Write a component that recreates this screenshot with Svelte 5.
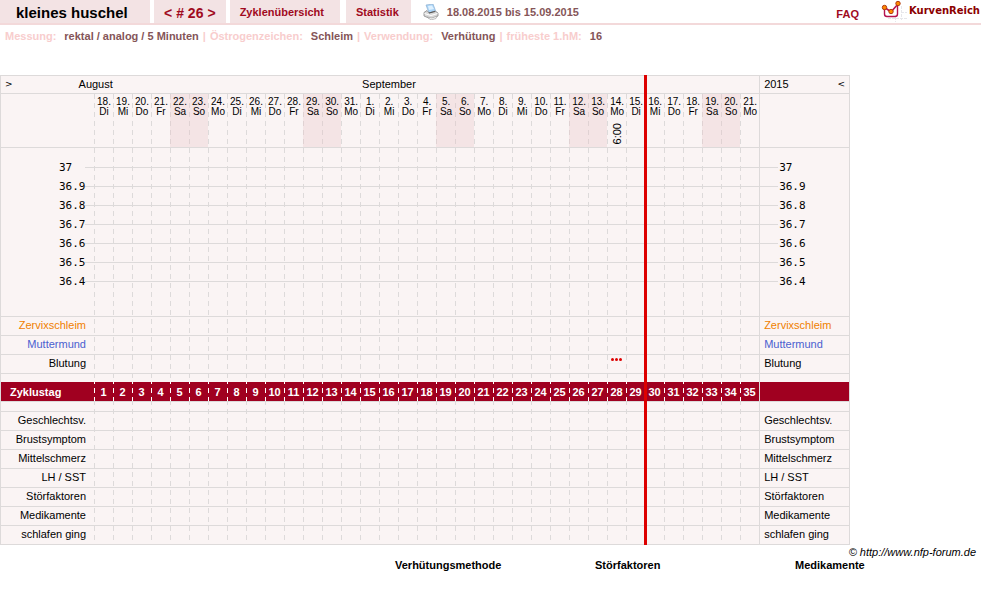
<header class="topbar">
  <nav>
    <h1>kleines huschel</h1>
    <div class="tab cycle">
      <a href="#prev" aria-label="Vorheriger Zyklus">&lt;</a>
      <a href="#26"># 26</a>
      <a href="#next" aria-label="Nächster Zyklus">&gt;</a>
    </div>
    <a class="tab overview" href="#zyklen">Zyklenübersicht</a>
    <a class="tab stats" href="#statistik">Statistik</a>
  </nav>
  <a class="print" href="#drucken" aria-label="Drucken">
    <svg width="16" height="16" viewBox="0 0 16 16">
      <path d="M3 1 L10 0 L13 8 L6 9 Z" fill="#a9d4f8" stroke="#8fb0d0" stroke-width=".7" />
      <path d="M5 2 L9 1.500 L11 5 L6 6 Z" fill="#dff1ff" />
      <path d="M1 8.500 L4 6.500 L6 9 L12 7 L15 9 V12 L8 15 L1 12 Z" fill="#d8d8d8" stroke="#888888" stroke-width=".8" />
      <path d="M1.500 9.500 L8 11.500 L14.500 9.500" fill="none" stroke="#ffffff" />
      <path d="M4 13 L9 14 L14 12 L13 14.500 L8 16 Z" fill="#f4f4f4" stroke="#999999" stroke-width=".6" />
      <path d="M6 9 L12 7.500" stroke="#555555" stroke-width="1.1" />
    </svg>
  </a>
  <span class="period">18.08.2015 bis 15.09.2015</span>
  <a class="faq" href="#faq">FAQ</a>
  <a class="brand" href="#start">
    <svg width="26" height="22" viewBox="0 0 26 22">
      <path d="M7 18.500 H26 M14.500 17 V22 M20.500 6 V20 M20 12.500 H26" stroke="#e6e6ea" stroke-dasharray="3 1" fill="none" />
      <path d="M3.500 7 V14 Q3.500 16.500 6 16.500 H14 Q16.500 16.500 16.500 14 V5" fill="none" stroke="#b5124f" stroke-width="1.4" />
      <path d="M3 7 L10 12 L17 4" fill="none" stroke="#b5124f" stroke-width="1.6" />
      <circle cx="3.500" cy="7.500" r="2.200" fill="#ff8a00" stroke="#b03a10" />
      <circle cx="10" cy="11.500" r="2.200" fill="#ff8a00" stroke="#b03a10" />
      <circle cx="17" cy="3.500" r="2.200" fill="#ff8a00" stroke="#b03a10" />
    </svg>
    <span>KurvenReich</span>
  </a>
</header>

<dl class="settings">
  {#each settings as { name, value }}
    <div>
      <dt>{name}:</dt>
      <dd>{value}</dd>
    </div>
  {/each}
</dl>

<main>
  <table>
    <colgroup>
      <col class="label-col" />
      {#each days as day}
        <col class="day-col" />
      {/each}
      <col class="end-col" />
    </colgroup>
    <thead>
      <tr class="months">
        <th colspan="13">
          <div class="month-start">
            <button aria-label="Zurück">&gt;</button>
            <span>August</span>
          </div>
        </th>
        <th colspan="17" class="september today">September</th>
        <th colspan="6"></th>
        <th class="end">
          <div class="year">
            <span>2015</span>
            <button aria-label="Weiter">&lt;</button>
          </div>
        </th>
      </tr>
      <tr class="dates">
        <td></td>
        {#each days as day}
          <th class="day" class:weekend={day.weekend} class:today={day.nr === lastDay}>
            {day.date}.<br />{day.name}
            {#if day.time}
              <span class="time">{day.time}</span>
            {/if}
          </th>
        {/each}
        <td class="end"></td>
      </tr>
    </thead>
    <tbody>
      {@render emptyRow('pad-top')}
      {#each temperatures as temperature}
        <tr class="temp">
          <th><span>{temperature}</span></th>
          {@render cells()}
          <td class="end"><span>{temperature}</span></td>
        </tr>
      {/each}
      {@render emptyRow('pad-bottom line')}

      {#each signs as sign}
        <tr class="entry line {sign.kind}">
          <th>{sign.label}</th>
          {@render cells(sign.marks)}
          <td class="end">{sign.label}</td>
        </tr>
      {/each}
      {@render emptyRow('spacer')}

      <tr class="cycle-day">
        <th>Zyklustag</th>
        {#each days as day}
          <td class="day" class:today={day.nr === lastDay}>{day.nr}</td>
        {/each}
        <td class="end"></td>
      </tr>
      {@render emptyRow('spacer after line')}

      {#each notes as note}
        <tr class="entry line">
          <th>{note}</th>
          {@render cells()}
          <td class="end">{note}</td>
        </tr>
      {/each}
    </tbody>
  </table>
</main>

<footer>
  <a href="http://www.nfp-forum.de">© http://www.nfp-forum.de</a>
  <div class="legend">
    <h2>Verhütungsmethode</h2>
    <h2>Störfaktoren</h2>
    <h2>Medikamente</h2>
  </div>
</footer>

{#snippet cells(marks = {})}
  {#each days as day}
    <td class="day" class:today={day.nr === lastDay}>
      {#if marks[day.nr]}
        <svg class="bleeding" width="11" height="3" viewBox="0 0 11 3">
          {#each Array(marks[day.nr]) as _, i}
            <circle cx={1.5 + i * 4} cy="1.5" r="1.5" />
          {/each}
        </svg>
      {/if}
    </td>
  {/each}
{/snippet}

{#snippet emptyRow(kind)}
  <tr class={kind}>
    <td></td>
    {@render cells()}
    <td class="end"></td>
  </tr>
{/snippet}

<script lang="ts">
  const lastDay = 29;
  const weekdays = ['So', 'Mo', 'Di', 'Mi', 'Do', 'Fr', 'Sa'];

  const settings = [
    { name: 'Messung', value: 'rektal / analog / 5 Minuten' },
    { name: 'Östrogenzeichen', value: 'Schleim' },
    { name: 'Verwendung', value: 'Verhütung' },
    { name: 'früheste 1.hM', value: '16' },
  ];

  const days = Array.from({ length: 35 }, (_, i) => {
    const date = new Date(2015, 7, 18 + i);
    return {
      nr: i + 1,
      date: date.getDate(),
      name: weekdays[date.getDay()],
      weekend: date.getDay() % 6 === 0,
      time: i === 27 ? '6:00' : '',
    };
  });

  const temperatures = ['37', '36.9', '36.8', '36.7', '36.6', '36.5', '36.4'];

  const signs = [
    { label: 'Zervixschleim', kind: 'mucus' },
    { label: 'Muttermund', kind: 'cervix' },
    { label: 'Blutung', kind: 'blood', marks: { 28: 3 } },
  ];

  const notes = ['Geschlechtsv.', 'Brustsymptom', 'Mittelschmerz', 'LH / SST', 'Störfaktoren', 'Medikamente', 'schlafen ging'];
</script>

<style>
  :global(body) {
    background: white;
    font-family: "Liberation Sans", Arial, sans-serif;
    font-size: 11px;
    color: black;
  }

  a {
    color: #a00a1e;
    text-decoration: none;
  }

  .topbar {
    display: flex;
    height: 23px;
    border-bottom: 2px solid #f3d9da;
    font-weight: bold;
    line-height: 25px;
    white-space: nowrap;
  }

  nav {
    display: flex;
    gap: 4px;
  }

  h1 {
    box-sizing: border-box;
    width: 150px;
    margin: 0;
    padding-left: 16px;
    background: #f3e3e4;
    font-size: 15px;
    line-height: 26px;
  }

  .tab {
    background: #f3e3e4;
    padding: 0 10px;
  }

  .cycle {
    display: flex;
    gap: 4px;
    font-size: 14px;
    line-height: 26px;
  }

  .overview {
    padding-right: 16px;
  }

  .stats {
    margin-left: 2px;
    padding-right: 12px;
  }

  .print {
    margin: 4px 8px 0 12px;
    line-height: 0;
  }

  .period {
    color: #855558;
  }

  .faq {
    margin-left: auto;
    line-height: 28px;
  }

  .brand {
    display: flex;
    gap: 2px;
    margin-left: 22px;
    color: #8b0000;
    font-family: "DejaVu Sans", Verdana, sans-serif;
    font-size: 10px;
    line-height: 21px;
    padding-right: 1px;
  }

  .settings {
    display: flex;
    margin: 0;
    padding: 4px 5px 0;
    font-weight: bold;
    line-height: 15px;
    color: #f8cdcd;
  }

  .settings div {
    display: flex;
  }

  .settings div + div::before {
    content: '|';
    padding: 0 4px;
  }

  dd {
    margin: 0 0 0 8px;
    color: #855558;
  }

  main {
    padding-top: 31px;
  }

  table {
    --grid: #dddada;
    --dash: repeating-linear-gradient(var(--grid) 0 5px, transparent 5px 9px);
    width: 100%;
    max-width: 850px;
    table-layout: fixed;
    border-collapse: separate;
    border-spacing: 0;
    box-sizing: border-box;
    border: 1px solid var(--grid);
    background: #faf4f4;
  }

  .label-col {
    width: 93px;
  }

  .day-col {
    width: 19px;
    background: var(--dash) left top / 1px 100% no-repeat;
  }

  .end-col {
    width: 90px;
  }

  th,
  td {
    padding: 0;
    font-weight: normal;
  }

  .end {
    border-left: 1px solid var(--grid);
    text-align: left;
  }

  .today {
    position: relative;
  }

  .today::after {
    content: '';
    position: absolute;
    top: -1px;
    right: -2px;
    bottom: -1px;
    width: 3px;
    background: #dd0000;
    z-index: 1;
  }

  .months th {
    height: 17px;
    border-bottom: 1px solid var(--grid);
    background: #faf4f4;
    text-align: left;
    line-height: 17px;
  }

  .month-start {
    display: flex;
    gap: 66px;
  }

  .year {
    display: flex;
    justify-content: space-between;
    padding: 0 4px;
  }

  .months button {
    border: none;
    background: none;
    padding: 0;
    font: 9px/15px "DejaVu Sans", sans-serif;
  }

  .month-start button {
    padding-left: 4px;
  }

  .months .september {
    padding-left: 40px;
  }

  .dates > * {
    height: 53px;
    border-bottom: 1px solid var(--grid);
    vertical-align: top;
  }

  .dates .day {
    box-sizing: border-box;
    height: 54px;
    padding: 3px 0 0 1px;
    font-size: 10px;
    line-height: 10px;
    text-align: center;
  }

  .weekend {
    background: rgba(232, 192, 196, 0.3);
  }

  .time {
    display: block;
    margin: 6px auto 0;
    writing-mode: vertical-rl;
    transform: rotate(180deg);
    font-size: 11px;
  }

  .pad-top td {
    height: 10px;
  }

  .pad-bottom td {
    height: 25px;
  }

  .line > * {
    border-bottom: 1px solid var(--grid);
  }

  .temp > * {
    height: 19px;
    font: 11px/19px "DejaVu Sans Mono", monospace;
    text-align: left;
    background: linear-gradient(var(--grid), var(--grid)) 0 9px / 100% 1px no-repeat;
  }

  .temp th {
    padding-left: 58px;
    background-position: 84px 9px;
  }

  .temp .end {
    padding-left: 19px;
    background-size: 18px 1px;
  }

  .entry > * {
    height: 18px;
    line-height: 16px;
    vertical-align: top;
  }

  .entry:last-child > * {
    border-bottom: none;
  }

  .entry th {
    padding-right: 8px;
    text-align: right;
  }

  .entry .end {
    padding-left: 4px;
  }

  .mucus {
    color: #f08000;
  }

  .cervix {
    color: #4a5fd0;
  }

  .blood .day {
    text-align: center;
    line-height: 0;
  }

  .bleeding {
    margin-top: 3px;
    fill: #dd0000;
  }

  .spacer td {
    height: 8px;
  }

  .after td {
    height: 9px;
    border-top: 1px solid var(--grid);
  }

  .cycle-day > * {
    height: 19px;
    background: #a00020;
    color: white;
    font-weight: bold;
    text-align: center;
  }

  .cycle-day th {
    padding-left: 9px;
    text-align: left;
  }

  .cycle-day .day {
    background: #a00020 repeating-linear-gradient(white 0 2px, #a00020 2px 6px, white 6px 9px) left top / 1px 100% no-repeat;
  }

  footer {
    line-height: 13px;
    padding-top: 1px;
  }

  footer a {
    display: block;
    padding-right: 5px;
    color: black;
    font-style: italic;
    text-align: right;
  }

  .legend {
    display: flex;
    padding-left: 395px;
  }

  h2 {
    width: 200px;
    margin: 0;
    font-size: 11px;
  }

  h2:last-child {
    width: auto;
  }
</style>
